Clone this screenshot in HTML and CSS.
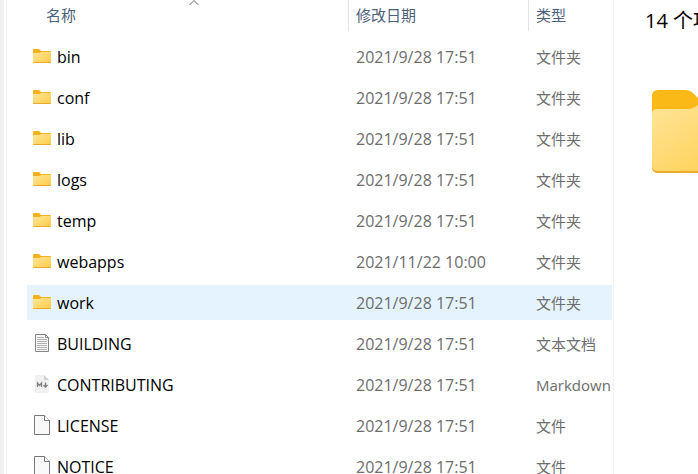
FILE: index.html
```html
<!DOCTYPE html>
<html lang="zh-CN">
<head>
  <meta charset="UTF-8">
  <title>文件</title>
  <link rel="stylesheet" href="styles.css">
</head>
<body>
  <svg class="symbols" aria-hidden="true">
    <defs>
      <linearGradient id="folderFill" x1="0" y1="0" x2="1" y2="1">
        <stop offset="0" stop-color="#ffe69c"/>
        <stop offset="1" stop-color="#ffcb45"/>
      </linearGradient>
    </defs>
    <symbol id="folder" viewBox="0 0 18 14">
      <path d="M0 1q0-1 1-1h5l2 2h9q1 0 1 1v3H0z" fill="#f6b21b"/>
      <path d="M0 4h7l1-1h10v10q0 1-1 1H1q-1 0-1-1z" fill="url(#folderFill)"/>
      <path d="M0 13h18q0 1-1 1H1q-1 0-1-1z" fill="#e9ab2c"/>
    </symbol>
    <symbol id="text" viewBox="0 0 18 20">
      <path d="M2.500 1.500h10l3 3v14h-13z" fill="#f8f8f8" stroke="#858585"/>
      <path d="M12.500 1.500v3h3" fill="none" stroke="#858585"/>
      <path d="M4 4.500h7M4 6.500h10M4 8.500h10M4 10.500h10M4 12.500h10M4 14.500h10M4 16.500h10" stroke="#b0b0b0"/>
    </symbol>
    <symbol id="markdown" viewBox="0 0 18 20">
      <path d="M3 1h8l5 5v12q0 1-1 1H3q-1 0-1-1V2q0-1 1-1z" fill="#f1f1f1"/>
      <path d="M11 1l5 5h-4q-1 0-1-1z" fill="#cfcfcf"/>
      <path d="M4.500 13V9l2 2.500 2-2.500v4" fill="none" stroke="#808080" stroke-width="1.300"/>
      <path d="M12.500 8.500v4M10.500 11l2 2 2-2" fill="none" stroke="#808080" stroke-width="1.300"/>
    </symbol>
    <symbol id="file" viewBox="0 0 18 20">
      <path d="M1.500.5h10l5 5v14h-15z" fill="#f9f9f9" stroke="#777"/>
      <path d="M11.500.5v5h5" fill="#fff" stroke="#777"/>
    </symbol>
  </svg>

  <div class="edge"></div>

  <main class="list">
    <table>
      <thead>
        <tr>
          <th class="name">
            <svg class="sort" viewBox="0 0 10 6" aria-hidden="true"><path d="M.5 5L5 .5 9.500 5" fill="none" stroke="#666"/></svg>
            <button type="button">名称</button>
          </th>
          <th class="date"><button type="button">修改日期</button></th>
          <th class="type"><button type="button">类型</button></th>
        </tr>
      </thead>
      <tbody>
        <tr><td class="name"><svg class="icon folder"><use href="#folder"/></svg>bin</td><td>2021/9/28 17:51</td><td class="type">文件夹</td></tr>
        <tr><td class="name"><svg class="icon folder"><use href="#folder"/></svg>conf</td><td>2021/9/28 17:51</td><td class="type">文件夹</td></tr>
        <tr><td class="name"><svg class="icon folder"><use href="#folder"/></svg>lib</td><td>2021/9/28 17:51</td><td class="type">文件夹</td></tr>
        <tr><td class="name"><svg class="icon folder"><use href="#folder"/></svg>logs</td><td>2021/9/28 17:51</td><td class="type">文件夹</td></tr>
        <tr><td class="name"><svg class="icon folder"><use href="#folder"/></svg>temp</td><td>2021/9/28 17:51</td><td class="type">文件夹</td></tr>
        <tr><td class="name"><svg class="icon folder"><use href="#folder"/></svg>webapps</td><td>2021/11/22 10:00</td><td class="type">文件夹</td></tr>
        <tr class="hovered"><td class="name"><svg class="icon folder"><use href="#folder"/></svg>work</td><td>2021/9/28 17:51</td><td class="type">文件夹</td></tr>
        <tr><td class="name"><svg class="icon"><use href="#text"/></svg>BUILDING</td><td>2021/9/28 17:51</td><td class="type">文本文档</td></tr>
        <tr><td class="name"><svg class="icon"><use href="#markdown"/></svg>CONTRIBUTING</td><td>2021/9/28 17:51</td><td class="type">Markdown</td></tr>
        <tr><td class="name"><svg class="icon"><use href="#file"/></svg>LICENSE</td><td>2021/9/28 17:51</td><td class="type">文件</td></tr>
        <tr><td class="name"><svg class="icon"><use href="#file"/></svg>NOTICE</td><td>2021/9/28 17:51</td><td class="type">文件</td></tr>
      </tbody>
    </table>
  </main>

  <aside class="details">
    <h2>14 个项目</h2>
    <svg class="big-folder" viewBox="0 0 100 83" aria-hidden="true">
      <path d="M0 6q0-6 6-6h27q5 0 8 3l9 9h44q6 0 6 6v20H0z" fill="#fbb917"/>
      <path d="M0 24q0-5 5-5h31q4 0 7-2l3-2q3-3 7-3h41q6 0 6 6v59q0 6-6 6H6q-6 0-6-6z" fill="#e8ad2e"/>
      <path d="M0 24q0-5 5-5h31q4 0 7-2l3-2q3-3 7-3h41q6 0 6 6v57q0 6-6 6H6q-6 0-6-6z" fill="url(#folderFill)"/>
    </svg>
  </aside>
</body>
</html>
```
FILE: styles.css
```css
* {
  box-sizing: border-box;
}

body {
  margin: 0;
  height: 100vh;
  display: flex;
  overflow: hidden;
  background: #fff;
  color: #000;
  font-family: "Open Sans", "Noto Sans CJK SC", sans-serif;
  font-size: 16px;
  line-height: 20px;
}

.symbols {
  position: absolute;
  width: 0;
  height: 0;
}

.edge {
  flex: 0 0 4px;
  margin-right: 2px;
  background: #f0f0f0;
}

.list {
  flex: 1;
  min-width: 0;
  padding: 0 1px 0 20px;
  border-left: 1px solid #f3f3f3;
  overflow: hidden;
}

table {
  width: 100%;
  table-layout: fixed;
  border-collapse: separate;
  border-spacing: 0;
}

th {
  position: relative;
  height: 36px;
  padding: 0 0 5px;
  font-size: 15px;
  font-weight: normal;
  text-align: left;
}

th.name {
  width: 321px;
}

th.date {
  width: 180px;
}

th button {
  display: block;
  width: 100%;
  height: 31px;
  padding: 0 7px 2px;
  border: 0;
  border-left: 1px solid #e3e3e3;
  background: none;
  color: #4c607a;
  font: inherit;
  text-align: left;
}

th.name button {
  padding-left: 18px;
  border-left: 1px solid transparent;
}

.sort {
  position: absolute;
  top: 0;
  left: 162px;
  width: 10px;
  height: 6px;
}

td {
  height: 41px;
  padding: 0 0 0 8px;
  border: solid transparent;
  border-width: 3px 0;
  background-clip: padding-box;
  color: #6d6d6d;
  line-height: 32px;
  white-space: nowrap;
  overflow: hidden;
}

td.name {
  padding-left: 6px;
  color: #000;
}

td.type {
  font-size: 15px;
}

.hovered td {
  background-color: #e5f3ff;
}

.hovered td:first-child {
  border-radius: 2px 0 0 2px;
}

.icon {
  width: 18px;
  height: 20px;
  margin-right: 6px;
  vertical-align: -3px;
}

.icon.folder {
  height: 14px;
  vertical-align: baseline;
}

.details {
  flex: 0 0 85px;
  padding: 6px 0 0 31px;
  border-left: 1px solid #f3f3f3;
  overflow: hidden;
}

h2 {
  margin: 0;
  font-size: 20px;
  font-weight: normal;
  line-height: 30px;
  white-space: nowrap;
}

.big-folder {
  display: block;
  width: 100px;
  height: 83px;
  margin: 54px 0 0 7px;
}
```
